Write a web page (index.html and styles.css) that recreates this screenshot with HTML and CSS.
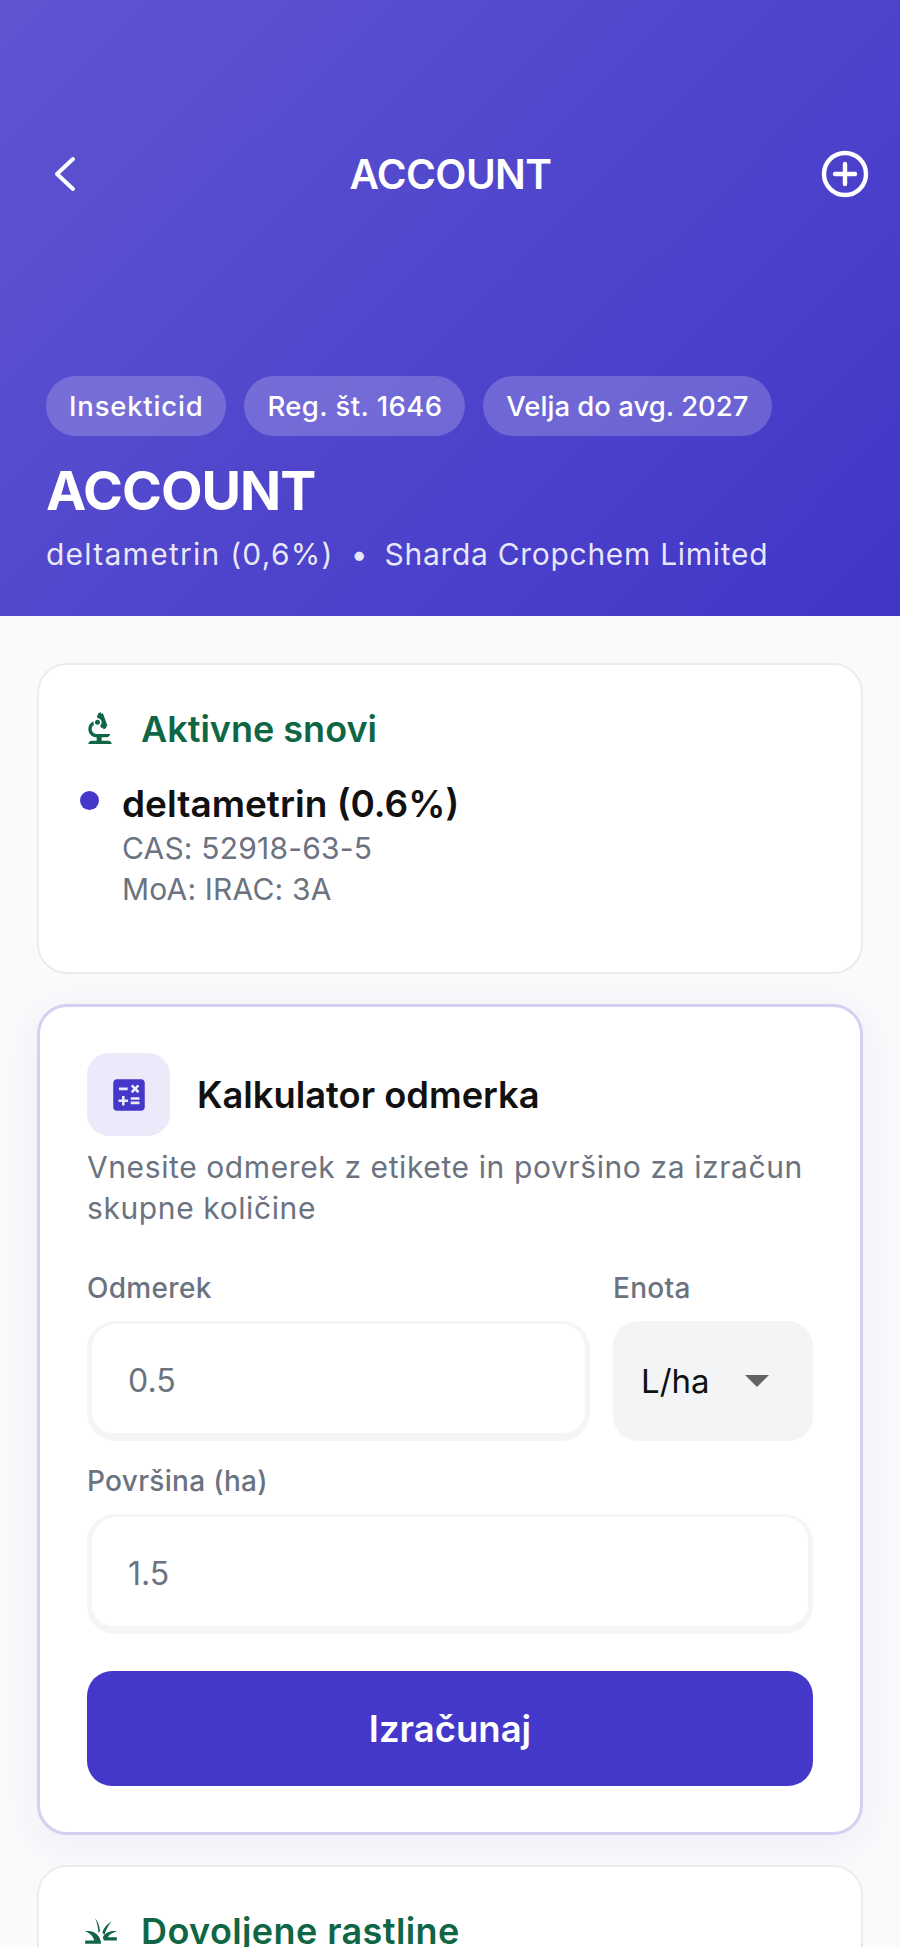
FILE: index.html
```html
<!DOCTYPE html>
<html lang="en">
<head>
    <meta charset="UTF-8">
    <meta name="viewport" content="width=device-width, initial-scale=1.0">
    <title>ACCOUNT</title>
    <link rel="stylesheet" href="styles.css">
</head>
<body>
    <header class="hero">
        <div class="nav">
            <svg class="nav-back" viewBox="0 0 24 36" fill="none" stroke="#fff" stroke-width="4" stroke-linecap="round" stroke-linejoin="round"><path d="M20 3 L4 18 L20 33"/></svg>
            <span class="nav-title">ACCOUNT</span>
            <svg class="nav-add" viewBox="0 0 48 48" fill="none" stroke="#fff" stroke-width="4.4" stroke-linecap="round"><circle cx="24" cy="24" r="21"/><path d="M24 14v20M14 24h20"/></svg>
        </div>
        <div class="chips">
            <span class="chip chip-first">Insekticid</span>
            <span class="chip chip-reg">Reg. št. 1646</span>
            <span class="chip">Velja do avg. 2027</span>
        </div>
        <h1 class="hero-title">ACCOUNT</h1>
        <p class="hero-sub"><span class="sub-substance">deltametrin (0,6%)</span><span class="sep">•</span><span class="sub-company">Sharda Cropchem Limited</span></p>
    </header>

    <main class="content">
        <section class="card">
            <h2 class="card-head">
                <svg class="head-icon" viewBox="0 0 24 24" fill="#0f6645"><path d="M7 19c-1.1 0-2 .9-2 2h14c0-1.1-.9-2-2-2h-4v-2h3c1.1 0 2-.9 2-2h-8c-1.66 0-3-1.34-3-3 0-1.09.59-2.04 1.46-2.56C8.17 9.03 8 8.54 8 8c0-.21.04-.42.09-.62C6.28 8.13 5 9.92 5 12c0 2.76 2.24 5 5 5v2H7z"/><path d="M10.56 5.51C11.91 5.54 13 6.64 13 8c0 .75-.33 1.41-.85 1.87l.59 1.62.94-.34.34.94 1.88-.68-.34-.94.94-.34-2.74-7.52-.94.34-.34-.94-1.88.68.34.94-.94.35.56 1.53z"/><circle cx="10.5" cy="8" r="1.5"/></svg>
                Aktivne snovi
            </h2>
            <div class="substance">
                <span class="dot"></span>
                <div>
                    <div class="substance-name">deltametrin (0.6%)</div>
                    <div class="substance-meta">CAS: 52918-63-5</div>
                    <div class="substance-meta">MoA: IRAC: 3A</div>
                </div>
            </div>
        </section>

        <section class="card calc">
            <div class="calc-head">
                <div class="calc-icon">
                    <svg viewBox="0 0 24 24" fill="#4338ca"><path d="M19 3H5c-1.1 0-2 .9-2 2v14c0 1.1.9 2 2 2h14c1.1 0 2-.9 2-2V5c0-1.1-.9-2-2-2zm-5.97 4.06L14.09 6l1.41 1.41L16.91 6l1.06 1.06-1.41 1.41 1.41 1.41-1.06 1.06-1.41-1.4-1.41 1.41-1.06-1.06 1.41-1.41-1.41-1.42zm-6.78.66h5v1.5h-5v-1.5zM11.5 16h-2v2H8v-2H6v-1.5h2v-2h1.5v2h2V16zm6.5 1.25h-5v-1.5h5v1.5zm0-2.5h-5v-1.5h5v1.5z"/></svg>
                </div>
                <h2 class="calc-title">Kalkulator odmerka</h2>
            </div>
            <p class="calc-desc">Vnesite odmerek z etikete in površino za izračun skupne količine</p>
            <div class="row">
                <div class="field field-grow">
                    <div class="label">Odmerek</div>
                    <div class="input">0.5</div>
                </div>
                <div class="field field-unit">
                    <div class="label">Enota</div>
                    <div class="select"><span>L/ha</span><i class="caret"></i></div>
                </div>
            </div>
            <div class="field field-area">
                <div class="label">Površina (ha)</div>
                <div class="input">1.5</div>
            </div>
            <button class="calc-btn">Izračunaj</button>
        </section>

        <section class="card">
            <h2 class="card-head card-head-wide">
                <svg class="head-icon icon-grass" viewBox="0 0 24 24" fill="#0f6645"><path d="M12 20H2v-2h5.75C7.02 15.19 4.81 12.99 2 12.26 2.64 12.1 3.31 12 4 12c4.42 0 8 3.58 8 8z"/><path d="M22 12.26c-.64-.16-1.31-.26-2-.26-2.93 0-5.48 1.57-6.88 3.92.3.67.54 1.37.68 2.08H22v-2h-5.75c.73-1.84 2.94-3.01 5.75-3.74z"/><path d="M8.2 4c1.7 2 2.9 4.800 3.200 8-.4.4-.7.8-1 1.200C10.200 9.800 9.500 6.700 8.200 4z"/><path d="M18.800 6c-2.800 1.400-5 3.800-6 6.800.5.6 1 1.200 1.300 1.900C15 11.500 16.500 8.400 18.800 6z"/></svg>
                Dovoljene rastline
            </h2>
        </section>
    </main>
</body>
</html>
```
FILE: styles.css
```css
html, body {
    margin: 0;
    padding: 0;
    height: 1947px;
    overflow: hidden;
}
body {
    font-family: Inter, "Noto Sans", sans-serif;
    background: #f9fafb;
    color: #111827;
}
.hero {
    height: 616px;
    box-sizing: border-box;
    padding: 150px 46px 0;
    background: linear-gradient(135deg, #5f55d1 0%, #4036c7 100%);
    color: #fff;
}
.nav {
    display: flex;
    align-items: center;
    justify-content: space-between;
    height: 48px;
    margin-right: -15px;
}
.nav-back {
    width: 24px;
    height: 36px;
    margin-left: 7px;
}
.nav-title {
    margin-left: 3px;
    font-size: 40.5px;
    font-weight: 600;
    letter-spacing: -0.6px;
}
.nav-add {
    width: 48px;
    height: 48px;
}
.chips {
    display: flex;
    gap: 18px;
    margin-top: 178px;
}
.chip {
    height: 60px;
    line-height: 60px;
    padding: 0 23px;
    border-radius: 30px;
    font-size: 27.5px;
    font-weight: 500;
    background: rgba(255, 255, 255, 0.2);
}
.chip-first {
    letter-spacing: 0.8px;
}
.chip-reg {
    letter-spacing: 0.4px;
}
.hero-title {
    margin: 23px 0 0;
    font-size: 54px;
    line-height: 64px;
    font-weight: 700;
    letter-spacing: -1px;
}
.hero-sub {
    display: flex;
    margin: 12px 0 0;
    font-size: 30px;
    line-height: 38px;
    color: rgba(255, 255, 255, 0.88);
}
.sub-substance {
    letter-spacing: 1.25px;
}
.sub-company {
    letter-spacing: 0.7px;
}
.sep {
    margin: 0 17px;
}
.content {
    padding: 47px 37px 0;
    display: flex;
    flex-direction: column;
    gap: 30px;
}
.card {
    background: #fff;
    border: 2.5px solid #ebecee;
    border-radius: 30px;
    box-sizing: border-box;
    padding: 40px 41px 0;
    height: 311px;
}
.card-head {
    display: flex;
    align-items: center;
    gap: 21px;
    margin: 0;
    font-size: 36px;
    font-weight: 600;
    color: #0f6645;
    line-height: 48px;
}
.card-head-wide {
    letter-spacing: 0.4px;
}
.head-icon {
    width: 40px;
    height: 40px;
}
.icon-grass {
    width: 38px;
    height: 38px;
    margin-left: 2px;
}
.substance {
    display: flex;
    margin-top: 29px;
}
.dot {
    width: 19px;
    height: 19px;
    border-radius: 50%;
    background: #4338ca;
    margin: 9px 23px 0 0;
}
.substance-name {
    font-size: 37px;
    font-weight: 600;
    line-height: 44px;
    margin-bottom: 2px;
    color: #111;
}
.substance-meta {
    font-size: 30px;
    line-height: 41px;
    letter-spacing: 0.2px;
    color: #6b7280;
}
.calc {
    height: 831px;
    padding: 46px 47px 0;
    border: 3px solid #d4d0f2;
    box-shadow: 0 8px 40px rgba(67, 56, 202, 0.06);
}
.calc-head {
    display: flex;
    align-items: center;
    gap: 27px;
}
.calc-icon {
    width: 83px;
    height: 83px;
    border-radius: 22px;
    background: #ebe9fa;
    display: flex;
    align-items: center;
    justify-content: center;
}
.calc-icon svg {
    width: 42px;
    height: 42px;
}
.calc-title {
    margin: 0;
    font-size: 36.3px;
    font-weight: 600;
    color: #111;
}
.calc-desc {
    margin: 11px 0 0;
    font-size: 30px;
    line-height: 41px;
    letter-spacing: 0.6px;
    color: #6b7280;
}
.row {
    display: flex;
    gap: 23px;
    margin-top: 39px;
}
.field-grow {
    flex: 1;
}
.field-unit {
    width: 200px;
}
.field-area {
    margin-top: 20px;
}
.label {
    font-size: 28px;
    font-weight: 500;
    letter-spacing: 0.3px;
    line-height: 40px;
    color: #6b7280;
    margin-bottom: 13px;
}
.input {
    height: 120px;
    box-sizing: border-box;
    border: 5px solid #f4f5f7;
    border-top-width: 3px;
    border-bottom-width: 8px;
    border-radius: 28px;
    background: #fff;
    padding: 3px 36px 0;
    display: flex;
    align-items: center;
    font-size: 32px;
    color: #6b7280;
}
.select {
    height: 120px;
    border-radius: 25px;
    background: #f3f4f6;
    display: flex;
    align-items: center;
    justify-content: space-between;
    padding: 0 44px 0 28px;
    font-size: 33px;
    color: #111;
}
.caret {
    width: 0;
    height: 0;
    border-left: 12px solid transparent;
    border-right: 12px solid transparent;
    border-top: 12px solid #636363;
}
.calc-btn {
    display: block;
    width: 100%;
    height: 115px;
    margin-top: 37px;
    border: none;
    border-radius: 25px;
    background: #4338ca;
    color: #fff;
    font-family: inherit;
    font-size: 36.5px;
    font-weight: 600;
}
```
